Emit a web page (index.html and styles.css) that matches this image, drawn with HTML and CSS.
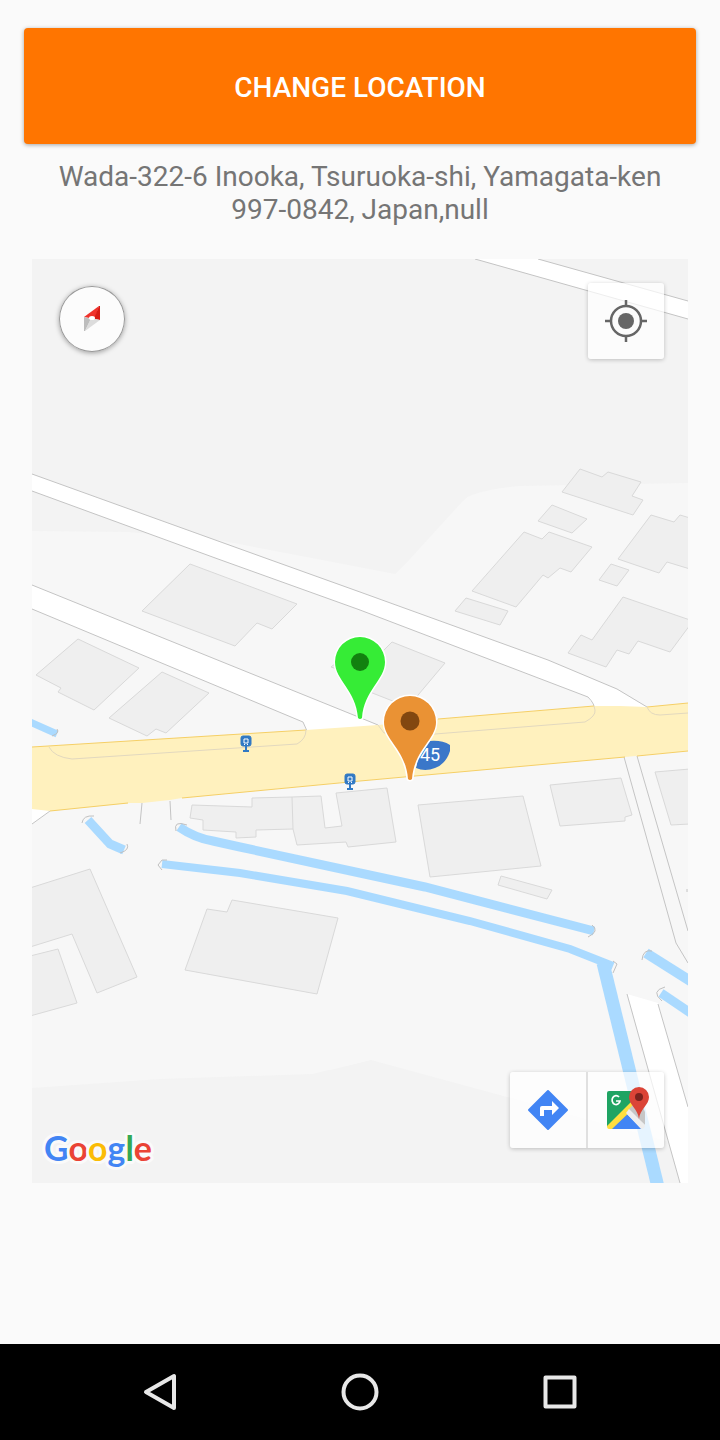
FILE: index.html
```html
<!DOCTYPE html>
<html lang="en">
<head>
<meta charset="utf-8">
<meta name="viewport" content="width=device-width, initial-scale=1">
<title>Location</title>
<link rel="stylesheet" href="styles.css">
</head>
<body>
<main class="screen">
  <button class="change-button" type="button">CHANGE LOCATION</button>
  <p class="address">Wada-322-6 Inooka, Tsuruoka-shi, Yamagata-ken 997-0842, Japan,null</p>
  <section class="map" aria-label="Map">
    <svg class="map-canvas" viewBox="32 259 656 924" preserveAspectRatio="xMidYMid slice" role="img" aria-label="Street map with two markers">
      <path class="land" d="M32 531L128 532L218 540L317 559L395 574L410 559L461 503Q468 495 478 493Q494 488 520 486L688 483V1147L662 1140L570 1115L507 1097L371 1060L347 1066L312 1074L160 1079L32 1088Z"/>
      <g class="building">
        <path d="M190 564L297 604L272 629L257 623L235 646L142 611Z"/>
        <path d="M78 639L139 668L94 710L58 692L61 688L36 675Z"/>
        <path d="M162 672L209 693L166 733L156 729L147 736L109 718Z"/>
        <path d="M392 642L445 663L408 707L352 685L360 677L331 667L346 655L375 659Z"/>
        <path d="M580 469L602 477L608 472L641 482L632 496L643 500L633 515L562 492Z"/>
        <path d="M552 505L587 519L572 533L538 521Z"/>
        <path d="M524 532L542 539L549 532L592 547L571 572L560 568L548 578L543 575L516 607L472 591Z"/>
        <path d="M466 598L508 611L500 625L455 611Z"/>
        <path d="M690 518L680 515L674 522L651 515L618 559L659 573L667 562L690 569"/>
        <path d="M611 564L629 570L617 586L599 580Z"/>
        <path d="M690 620L623 597L592 640L581 635L568 653L606 667L617 650L629 654L638 641L670 652L690 625"/>
        <path d="M192 805L252 807V798L292 797L321 796L325 828L342 826L336 793L387 788L396 842L348 847L346 842L297 845L293 829L256 830V837L236 838V832L203 830V820L190 818ZM292 797L293 829"/>
        <path d="M418 805L523 796L541 866L430 877Z"/>
        <path d="M550 785L621 778L632 815L625 817V821L560 826Z"/>
        <path d="M690 769L655 772L671 825L690 824"/>
        <path d="M501 876L552 890L547 899L498 885Z"/>
        <path d="M30 888L90 869L137 977L97 993L72 934L30 947"/>
        <path d="M30 956L58 949L77 1003L30 1016"/>
        <path d="M207 909L227 912L232 900L338 918L317 994L185 970Z"/>
      </g>
      <g class="road">
        <path d="M475 259L688 319V301L538 259Z"/>
        <path d="M32 474L268 559L360 592L548 660L617 689L647 707L594 707L588 697L360 610L218 559L32 491Z"/>
        <path d="M32 585L356 716L378 725L360 728L306 731L303 722L32 609Z"/>
        <path d="M627 994L658 1003L688 1107V1183H680Z"/>
        <path d="M32 807L50 811L32 824Z"/>
      </g>
      <g class="road-edge">
        <path d="M475 259L688 319M538 259L688 301"/>
        <path d="M32 474L268 559L360 592L548 660L617 689L647 707M32 491L218 559L360 610L588 697Q595 704 595 711"/>
        <path d="M32 585L356 716L378 725M32 609L303 722L307 731"/>
        <path d="M624 757L676 943L688 963M637 756L688 931M627 994L680 1183M658 1004L688 1107M32 824L50 811M142 803L140 824M170 801L171 820M687 889V892"/>
      </g>
      <path class="highway" d="M32 747L306 730L378 725L438 719L594 706L620 706L647 707L688 703V751L625 757L360 781L182 798L170 800L142 803L130 803L50 811L32 809Z"/>
      <path class="highway-edge" d="M32 747L306 730M438 719L594 706M647 707L688 703M50 811L128 803M182 798L360 781L625 757M637 756L688 751"/>
      <path class="lane-edge" d="M49 747Q54 757 72 759L297 744Q306 739 306 730M378 725L384 733L435 734L585 722Q596 716 595 710L594 706M647 707Q650 715 660 715L688 713"/>
      <g class="water">
        <path d="M28 721L57 734" stroke-width="7"/>
        <path d="M88 820L110 844L124 850" stroke-width="9"/>
        <path d="M179 827Q195 838 213 841L240 847L360 873L425 887L594 931" stroke-width="9"/>
        <path d="M162 864L240 873L347 891L470 921L570 949L613 966" stroke-width="8"/>
        <path d="M603 963L658 1187" stroke-width="13"/>
        <path d="M646 953L692 982" stroke-width="10"/>
        <path d="M661 993L692 1014" stroke-width="9"/>
      </g>
      <path class="culvert" d="M57 729Q60 733 52 736M82 823Q83 815 94 816M127 844Q130 850 120 853M176 831Q173 820 187 825M167 860H162L158 865L162 870M592 925Q600 931 588 937M613 961L617 964L613 973M642 960Q643 949 652 951M665 987Q650 991 662 1001"/>
      <g class="bus-stop">
        <rect x="241" y="736" width="10" height="10" rx="2"/>
        <path d="M246 745V750M243 751H249"/>
        <path class="bus-glyph" d="M244 739H248V743H244ZM244 745L245 744M248 745L247 744"/>
      </g>
      <g class="bus-stop">
        <rect x="345" y="774" width="10" height="10" rx="2"/>
        <path d="M350 783V788M347 789H353"/>
        <path class="bus-glyph" d="M348 777H352V781H348ZM348 783L349 782M352 783L351 782"/>
      </g>
      <path class="shield" d="M430 741Q442 740 450 745V751Q446 764 435 768Q425 772 416 768L420 750Z"/>
      <text class="shield-text" x="420" y="761">45</text>
      <g class="pin-green">
        <path class="pin-body" d="M360 637A25 25 0 0 1 385 662C385 680 364 690 362 718Q360 720 358 718C356 690 335 680 335 662A25 25 0 0 1 360 637Z"/>
        <circle class="pin-dot" cx="360" cy="662" r="9"/>
      </g>
      <g class="pin-orange">
        <path class="pin-body" d="M410 696A26 26 0 0 1 436 722C436 740 414 750 412 779Q410 781 408 779C406 750 384 740 384 722A26 26 0 0 1 410 696Z"/>
        <circle class="pin-dot" cx="410" cy="721" r="9.500"/>
      </g>
      <text class="logo" x="44" y="1161"><tspan fill="#4285f4">G</tspan><tspan fill="#ea4335">o</tspan><tspan fill="#fbbc05">o</tspan><tspan fill="#4285f4">g</tspan><tspan fill="#34a853">l</tspan><tspan fill="#ea4335">e</tspan></text>
    </svg>
    <button class="compass" type="button" aria-label="Reset compass">
      <svg viewBox="0 0 66 66" aria-hidden="true">
        <path fill="#f0322b" d="M25 31L40 20L36 33Z"/><path fill="#d81b14" d="M40 20H41V34L35 33Z"/>
        <path fill="#bdbdbd" d="M25 31V45H26L32 33Z"/><path fill="#dcdcdc" d="M26 45L41 34L32 32Z"/>
        <ellipse cx="33" cy="32" rx="3" ry="2" fill="#fff"/>
      </svg>
    </button>
    <button class="map-button locate" type="button" aria-label="My location">
      <svg viewBox="0 0 76 76" aria-hidden="true">
        <circle cx="38" cy="38" r="15" fill="none" stroke="#666" stroke-width="2.500"/>
        <circle cx="38" cy="38" r="8" fill="#666"/>
        <path d="M38 17V23M38 53V59M17 38H23M53 38H59" stroke="#666" stroke-width="2.500"/>
      </svg>
    </button>
    <div class="map-toolbar">
      <button class="map-button" type="button" aria-label="Directions">
        <svg viewBox="0 0 76 76" aria-hidden="true">
          <path fill="#4285f4" stroke="#4285f4" stroke-width="2" stroke-linejoin="round" d="M38 19L57 38L38 57L19 38Z"/>
          <path fill="#fff" d="M30 44V36Q30 34 32 34H42V29L49 36L42 43V38H34V44Z"/>
        </svg>
      </button>
      <button class="map-button" type="button" aria-label="Open in Google Maps">
        <svg viewBox="0 0 76 76" aria-hidden="true">
          <path fill="#1fa463" d="M21 19H50V29L19 55V21Q19 19 21 19Z"/>
          <path fill="#4285f4" d="M38 41L54 57H22Z"/>
          <path fill="#ffdf3f" d="M43 30L48 34L24 57H21Q19 57 19 54Z"/>
          <path fill="#c6c6c6" d="M44 34L51 26L57 40V53L40 38Z"/>
          <path fill="#eee" d="M38 41L41 37L57 53Q57 57 53 57Z"/>
          <path fill="#db4437" d="M51 15A10 10 0 0 1 61 25C61 33 52 37 51 47C50 37 41 33 41 25A10 10 0 0 1 51 15Z"/>
          <circle cx="51" cy="25" r="4" fill="#7b231e"/>
          <path fill="none" stroke="#fff" stroke-width="1.700" d="M31 25A4 4.500 0 1 0 32 29H28"/>
        </svg>
      </button>
    </div>
  </section>
</main>
<nav class="system-nav" aria-label="System">
  <button type="button" aria-label="Back"><svg viewBox="0 0 40 40" aria-hidden="true"><path d="M6 20L34 4V36Z"/></svg></button>
  <button type="button" aria-label="Home"><svg viewBox="0 0 40 40" aria-hidden="true"><circle cx="20" cy="20" r="16.500"/></svg></button>
  <button type="button" aria-label="Recent apps"><svg viewBox="0 0 40 40" aria-hidden="true"><rect x="5.500" y="5.500" width="29" height="29"/></svg></button>
</nav>
</body>
</html>
```
FILE: styles.css
```css
* { box-sizing: border-box; }
body {
  margin: 0;
  min-height: 100vh;
  display: flex;
  flex-direction: column;
  background: #fafafa;
  font-family: Roboto, "Noto Sans", sans-serif;
}
button {
  padding: 0;
  border: 0;
  font: inherit;
  cursor: pointer;
}
svg { display: block; }
.screen {
  flex: 1;
  display: flex;
  flex-direction: column;
  padding: 28px 24px;
}
.change-button {
  min-height: 116px;
  border-radius: 4px;
  background: #ff7500;
  color: #fff;
  font-size: 28px;
  font-weight: 500;
  line-height: 34px;
  padding-top: 4px;
  box-shadow: 0 1px 4px rgba(0, 0, 0, .35);
}
.address {
  margin: 16px 8px 33px;
  color: #757575;
  font-size: 28px;
  line-height: 33px;
  text-align: center;
}
.map {
  position: relative;
  margin: 0 8px;
  aspect-ratio: 656 / 924;
  background: #f3f3f3;
  overflow: hidden;
}
.map-canvas { width: 100%; height: 100%; }
.land { fill: #f7f7f7; }
.building { fill: #efefef; stroke: #d9d9d9; stroke-width: 1; }
.road { fill: #fff; }
.road-edge { fill: none; stroke: #c4c4c4; stroke-width: 1; }
.highway { fill: #fff1be; }
.highway-edge { fill: none; stroke: #f5cf66; stroke-width: 1; }
.lane-edge { fill: none; stroke: #e2d8bf; stroke-width: 1; }
.water { fill: none; stroke: #aadaff; }
.culvert { fill: none; stroke: #c0c0c0; stroke-width: 1; }
.bus-stop { fill: #3079c4; stroke: #3079c4; stroke-width: 1; }
.bus-stop path { stroke-width: 2; }
.bus-stop .bus-glyph { fill: #3079c4; stroke: #fff; stroke-width: 1; }
.shield { fill: #3a77c9; }
.shield-text { fill: #fff; font-size: 18px; }
.pin-body { stroke: #fff; stroke-width: 3; paint-order: stroke; }
.pin-green .pin-body { fill: #36ec36; }
.pin-green .pin-dot { fill: #12810f; }
.pin-orange .pin-body { fill: #ea9234; }
.pin-orange .pin-dot { fill: #824710; }
.logo {
  font-family: Lato, sans-serif;
  font-size: 34px;
  font-weight: 700;
  stroke: #fafafa;
  stroke-width: 6;
  stroke-linejoin: round;
  paint-order: stroke;
}
.compass {
  position: absolute;
  top: 27px;
  left: 27px;
  width: 66px;
  height: 66px;
  border-radius: 50%;
  background: #fcfcfc;
  box-shadow: inset 0 0 0 1px #999, 0 1px 5px rgba(0, 0, 0, .35);
}
.map-button {
  width: 76px;
  height: 76px;
  background: transparent;
}
.locate,
.map-toolbar {
  position: absolute;
  right: 24px;
  border-radius: 3px;
  background: rgba(255, 255, 255, .7);
  box-shadow: 0 1px 4px rgba(0, 0, 0, .22);
}
.locate { top: 24px; }
.map-toolbar { bottom: 35px; display: flex; }
.map-toolbar .map-button + .map-button {
  width: 78px;
  border-left: 2px solid #e0e0e0;
}
.system-nav {
  display: flex;
  justify-content: center;
  align-items: center;
  gap: 160px;
  min-height: 96px;
  background: #000;
}
.system-nav button {
  width: 40px;
  height: 40px;
  background: transparent;
}
.system-nav svg {
  fill: none;
  stroke: #e8e8e8;
  stroke-width: 4;
  stroke-linejoin: round;
}
```
